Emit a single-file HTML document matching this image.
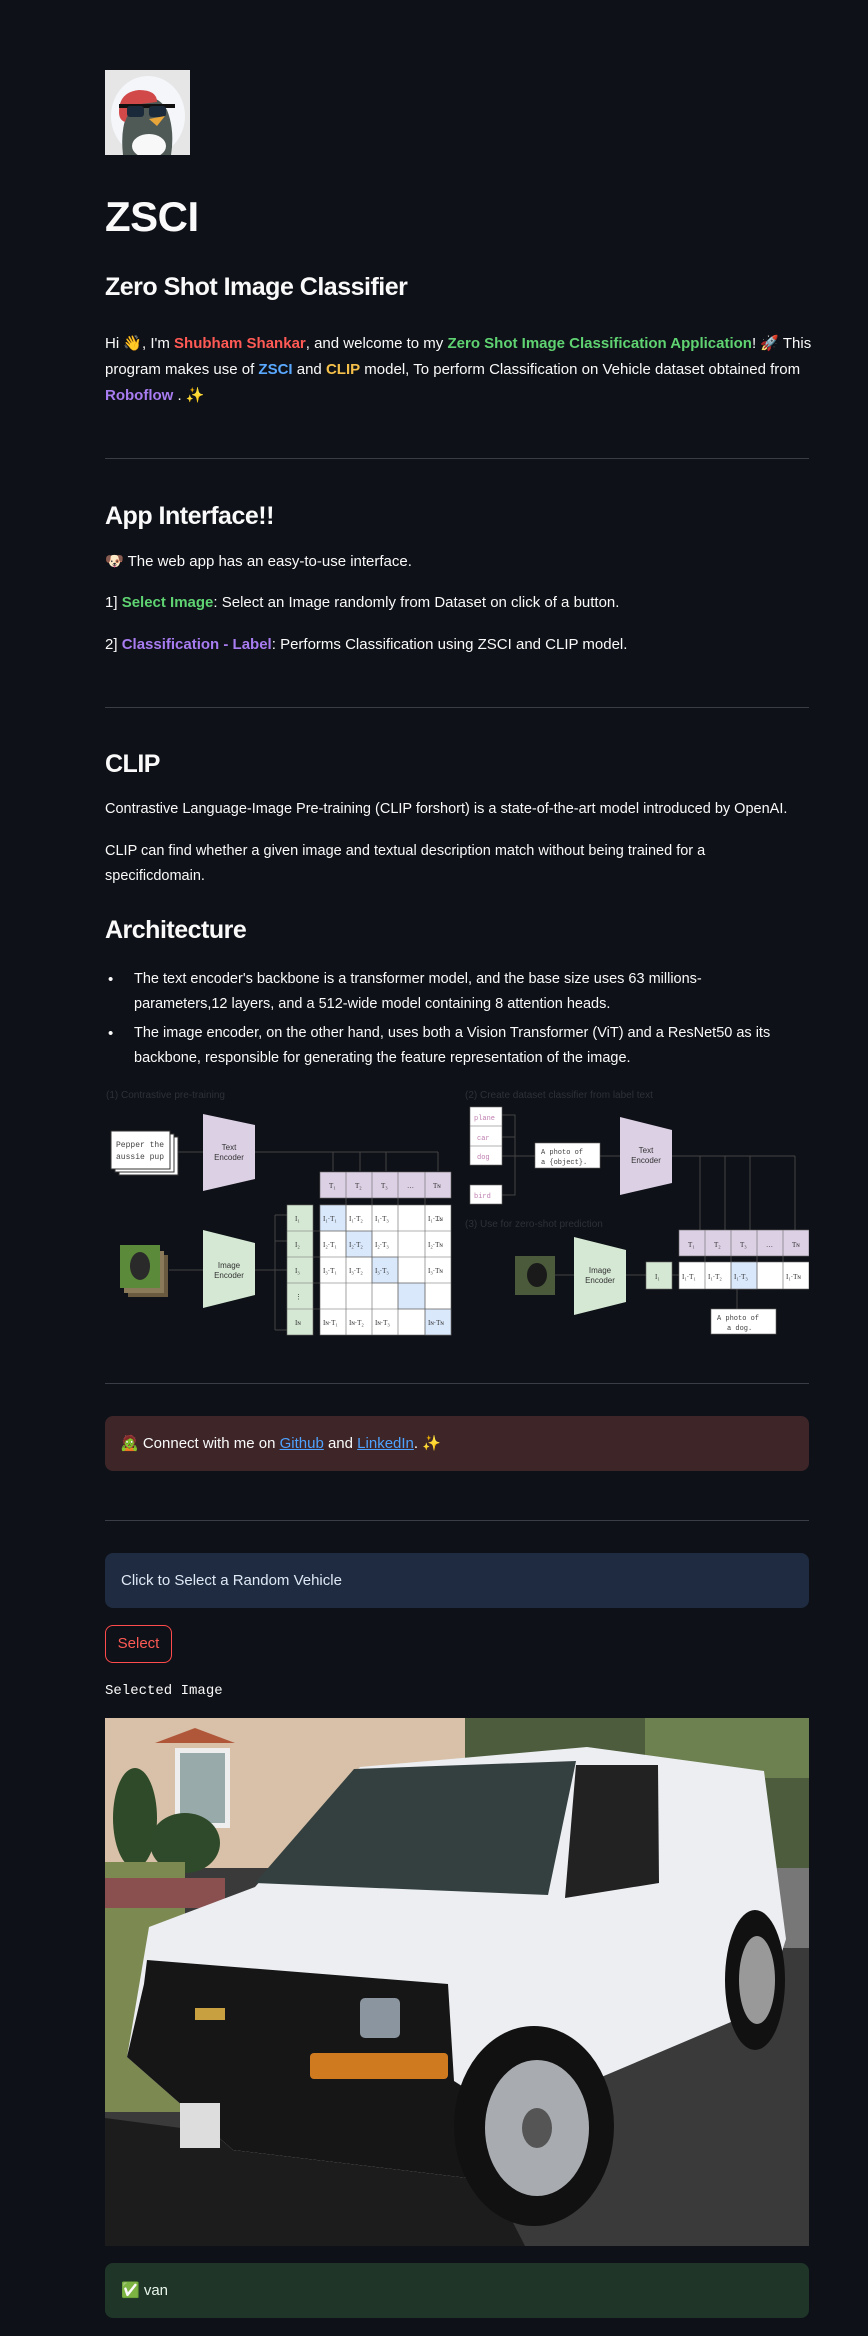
<!DOCTYPE html>
<html><head><meta charset="utf-8"><style>
*{margin:0;padding:0;box-sizing:border-box}
body{width:868px;height:2336px;background:#0e1117;color:#fafafa;font-family:"Liberation Sans",sans-serif;position:relative;overflow:hidden}
.a{position:absolute;white-space:nowrap}
.p{font-size:15px;line-height:26px;left:105px}
.h{font-weight:bold;left:105px;letter-spacing:-0.5px}
.hr{position:absolute;left:105px;width:704px;height:1px;background:#3a3d45}
.r{color:#ff5a55;font-weight:bold}.g{color:#5fd372;font-weight:bold}.b{color:#5aa9ff;font-weight:bold}.o{color:#f5c04a;font-weight:bold}.v{color:#a77cf0;font-weight:bold}
.box{position:absolute;left:105px;width:704px;border-radius:8px}
a{color:#4fa3ff;text-decoration:underline}
</style></head><body>

<svg class="a" style="left:105px;top:70px" width="85" height="85" viewBox="0 0 85 85">
<rect width="85" height="85" fill="#e6e6e6"/>
<ellipse cx="43" cy="46" rx="37" ry="40" fill="#f4f6fa"/>
<path d="M18 85 Q14 50 30 32 Q50 20 62 40 Q70 60 66 85Z" fill="#4f5a56"/>
<ellipse cx="44" cy="76" rx="17" ry="12" fill="#f8f8f8"/>
<path d="M14 42 Q14 22 34 20 Q52 20 52 32 L36 34 Q24 38 20 52 Q14 50 14 42Z" fill="#d2494a"/>
<rect x="14" y="34" width="56" height="4" fill="#111"/>
<rect x="22" y="36" width="17" height="11" rx="3" fill="#1b2a3a"/>
<rect x="44" y="36" width="17" height="11" rx="3" fill="#1b2a3a"/>
<path d="M44 49 L60 46 L52 56 Z" fill="#e8a53a"/>
</svg>

<div class="a h" style="top:192px;font-size:42px;line-height:50px">ZSCI</div>
<div class="a h" style="top:272px;font-size:25px;line-height:30px">Zero Shot Image Classifier</div>
<div class="a p" style="top:331px">Hi 👋, I'm <span class="r">Shubham Shankar</span>, and welcome to my <span class="g">Zero Shot Image Classification Application</span>! 🚀 This<br>program makes use of <span class="b">ZSCI</span> and <span class="o">CLIP</span> model, To perform Classification on Vehicle dataset obtained from<br><span class="v">Roboflow</span> . ✨</div>

<div class="hr" style="top:458px"></div>
<div class="a h" style="top:501px;font-size:25px;line-height:30px">App Interface!!</div>
<div class="a p" style="top:550px;line-height:24px">🐶 The web app has an easy-to-use interface.</div>
<div class="a p" style="top:591px;line-height:24px">1] <span class="g">Select Image</span>: Select an Image randomly from Dataset on click of a button.</div>
<div class="a p" style="top:633px;line-height:24px">2] <span class="v">Classification - Label</span>: Performs Classification using ZSCI and CLIP model.</div>

<div class="hr" style="top:707px"></div>
<div class="a h" style="top:749px;font-size:25px;line-height:30px">CLIP</div>
<div class="a p" style="top:797px;line-height:25px;font-size:14.5px">Contrastive Language-Image Pre-training (CLIP forshort) is a state-of-the-art model introduced by OpenAI.</div>
<div class="a p" style="top:839px;line-height:25px;font-size:14.5px">CLIP can find whether a given image and textual description match without being trained for a<br>specificdomain.</div>
<div class="a h" style="top:915px;font-size:25px;line-height:30px">Architecture</div>
<div class="a p" style="top:967px;left:108px;line-height:25px">•</div>
<div class="a p" style="top:967px;left:134px;line-height:25px;font-size:14.5px">The text encoder's backbone is a transformer model, and the base size uses 63 millions-<br>parameters,12 layers, and a 512-wide model containing 8 attention heads.</div>
<div class="a p" style="top:1021px;left:108px;line-height:25px">•</div>
<div class="a p" style="top:1021px;left:134px;line-height:25px;font-size:14.5px">The image encoder, on the other hand, uses both a Vision Transformer (ViT) and a ResNet50 as its<br>backbone, responsible for generating the feature representation of the image.</div>

<svg class="a" style="left:105px;top:1085px" width="704" height="260" viewBox="0 0 704 260" font-family="Liberation Sans" font-size="8">
<g fill="#2e3138" font-size="10"><text x="1" y="13">(1) Contrastive pre-training</text><text x="360" y="13">(2) Create dataset classifier from label text</text><text x="360" y="142">(3) Use for zero-shot prediction</text></g>
<g stroke="#444" fill="none" stroke-width="1">
<path d="M73 67H98M150 67H333M228 67V86M255 67V86M281 67V86M333 67V86"/>
<path d="M64 185H98M150 185H170M170 130V245M170 130H182M170 156H182M170 185H182M170 245H182"/>
<path d="M397 30H410V110H397M397 52H410M397 71H410M410 71H430M495 71H515M567 71H690M595 71V145M620 71V145M645 71V145M690 71V145"/>
<path d="M450 190H469M521 190H541M567 190H574M632 204V224"/>
</g>
<rect x="14" y="52" width="59" height="38" fill="#fff" stroke="#333"/>
<rect x="10" y="49" width="59" height="38" fill="#fff" stroke="#333"/>
<rect x="6" y="46" width="59" height="38" fill="#fff" stroke="#333"/>
<text x="11" y="62" font-family="Liberation Mono" fill="#444">Pepper the</text><text x="11" y="74" font-family="Liberation Mono" fill="#444">aussie pup</text>
<polygon points="98,29 150,40 150,94 98,106" fill="#dcd0e4"/>
<text x="124" y="65" text-anchor="middle" fill="#333">Text</text><text x="124" y="75" text-anchor="middle" fill="#333">Encoder</text>
<polygon points="98,145 150,158 150,210 98,223" fill="#d5e8d4"/>
<text x="124" y="183" text-anchor="middle" fill="#333">Image</text><text x="124" y="193" text-anchor="middle" fill="#333">Encoder</text>
<rect x="23" y="170" width="40" height="42" fill="#6a5a40"/><rect x="19" y="166" width="40" height="42" fill="#8a7a5a"/>
<rect x="15" y="160" width="40" height="43" fill="#5a8a3a"/><ellipse cx="35" cy="181" rx="10" ry="14" fill="#2a2a2a"/>
<g stroke="#666" stroke-width="0.6">
<rect x="215" y="87" width="131" height="26" fill="#dcd0e4"/>
<rect x="182" y="120" width="26" height="130" fill="#d5e8d4"/>
<rect x="215" y="120" width="131" height="130" fill="#fff"/>
<rect x="215" y="120" width="26" height="26" fill="#dae8fc"/><rect x="241" y="146" width="26" height="26" fill="#dae8fc"/><rect x="267" y="172" width="26" height="26" fill="#dae8fc"/><rect x="293" y="198" width="27" height="26" fill="#dae8fc"/><rect x="320" y="224" width="26" height="26" fill="#dae8fc"/>
<path d="M241 87V250M267 87V250M293 87V250M320 87V250M182 146H346M182 172H346M182 198H346M182 224H346" fill="none"/>
<rect x="365" y="22" width="32" height="58" fill="#fff"/><path d="M365 41H397M365 61H397"/>
<rect x="365" y="100" width="32" height="19" fill="#fff"/>
<rect x="430" y="58" width="65" height="25" fill="#fff"/>
<rect x="574" y="145" width="130" height="26" fill="#dcd0e4"/>
<rect x="541" y="177" width="26" height="27" fill="#d5e8d4"/>
<rect x="574" y="177" width="130" height="27" fill="#fff"/><rect x="626" y="177" width="26" height="27" fill="#dae8fc"/>
<path d="M600 145V204M626 145V204M652 145V204M678 145V204" fill="none"/>
<rect x="606" y="224" width="65" height="25" fill="#fff"/>
</g>
<g fill="#333" font-size="7" font-family="Liberation Serif">
<text x="224" y="103">T₁</text><text x="250" y="103">T₂</text><text x="276" y="103">T₃</text><text x="302" y="103">…</text><text x="328" y="103">Tɴ</text>
<text x="190" y="136">I₁</text><text x="190" y="162">I₂</text><text x="190" y="188">I₃</text><text x="190" y="214">⋮</text><text x="190" y="240">Iɴ</text>
<text x="218" y="136">I₁·T₁</text><text x="244" y="136">I₁·T₂</text><text x="270" y="136">I₁·T₃</text><text x="330" y="136">…</text><text x="323" y="136">I₁·Tɴ</text>
<text x="218" y="162">I₂·T₁</text><text x="244" y="162">I₂·T₂</text><text x="270" y="162">I₂·T₃</text><text x="323" y="162">I₂·Tɴ</text>
<text x="218" y="188">I₃·T₁</text><text x="244" y="188">I₃·T₂</text><text x="270" y="188">I₃·T₃</text><text x="323" y="188">I₃·Tɴ</text>
<text x="218" y="240">Iɴ·T₁</text><text x="244" y="240">Iɴ·T₂</text><text x="270" y="240">Iɴ·T₃</text><text x="323" y="240">Iɴ·Tɴ</text>
<text x="583" y="162">T₁</text><text x="609" y="162">T₂</text><text x="635" y="162">T₃</text><text x="661" y="162">…</text><text x="687" y="162">Tɴ</text>
<text x="550" y="194">I₁</text><text x="577" y="194">I₁·T₁</text><text x="603" y="194">I₁·T₂</text><text x="629" y="194">I₁·T₃</text><text x="681" y="194">I₁·Tɴ</text>
</g>
<g font-family="Liberation Mono" font-size="7" fill="#c080b0"><text x="369" y="35">plane</text><text x="372" y="55">car</text><text x="372" y="74">dog</text><text x="369" y="113">bird</text></g>
<g font-family="Liberation Mono" font-size="7" fill="#444"><text x="436" y="69">A photo of</text><text x="436" y="79">a {object}.</text><text x="612" y="235">A photo of</text><text x="622" y="245">a dog.</text></g>
<polygon points="515,32 567,45 567,98 515,110" fill="#dcd0e4"/>
<text x="541" y="68" text-anchor="middle" fill="#333">Text</text><text x="541" y="78" text-anchor="middle" fill="#333">Encoder</text>
<polygon points="469,152 521,165 521,217 469,230" fill="#d5e8d4"/>
<text x="495" y="188" text-anchor="middle" fill="#333">Image</text><text x="495" y="198" text-anchor="middle" fill="#333">Encoder</text>
<rect x="410" y="171" width="40" height="39" fill="#4a5a3a"/><ellipse cx="432" cy="190" rx="10" ry="12" fill="#1a1a1a"/>
</svg>

<div class="hr" style="top:1383px"></div>
<div class="box" style="top:1416px;height:55px;background:#3d2528"></div>
<div class="a p" style="top:1431px;left:120px;line-height:26px">🧟 Connect with me on <a>Github</a> and <a>LinkedIn</a>. ✨</div>
<div class="hr" style="top:1520px"></div>
<div class="box" style="top:1553px;height:55px;background:#1e2b40"></div>
<div class="a p" style="top:1568px;left:121px;line-height:26px;color:#dfe8f5">Click to Select a Random Vehicle</div>
<div class="a" style="left:105px;top:1625px;width:67px;height:38px;border:1px solid #ff4b4b;border-radius:8px;color:#ff5a55;font-size:15px;line-height:36px;text-align:center">Select</div>
<div class="a" style="left:105px;top:1682px;font-family:'Liberation Mono',monospace;font-size:14px;line-height:18px">Selected Image</div>

<svg class="a" style="left:105px;top:1718px" width="704" height="528" viewBox="0 0 704 528">
<rect width="704" height="528" fill="#3a3a3a"/>
<rect width="380" height="150" fill="#d8c1a8"/>
<rect x="360" width="344" height="160" fill="#4c5c3c"/>
<rect x="540" y="0" width="164" height="60" fill="#6d8050"/>
<rect x="70" y="30" width="55" height="80" fill="#eee"/><rect x="75" y="35" width="45" height="70" fill="#9aa"/>
<path d="M50 25 L90 10 L130 25Z" fill="#b0573a"/>
<ellipse cx="30" cy="100" rx="22" ry="50" fill="#2e4a28"/><ellipse cx="80" cy="125" rx="35" ry="30" fill="#2f4a2a"/>
<rect x="0" y="144" width="80" height="250" fill="#7c8a52"/>
<rect x="0" y="160" width="120" height="30" fill="#8a5050"/>
<rect x="620" y="150" width="84" height="80" fill="#777"/>
<polygon points="0,400 380,450 420,528 0,528" fill="#1c1c1c"/>
<polygon points="255,49 482,29 659,53 681,221 659,290 487,363 388,388 371,461 128,432 22,339 44,209 150,169" fill="#eceef2"/>
<polygon points="249,51 471,43 443,177 150,165" fill="#34403f"/>
<polygon points="471,47 553,47 554,165 460,180" fill="#222"/>
<polygon points="42,242 343,266 349,363 388,388 371,461 128,432 22,339 39,266" fill="#161616"/>
<rect x="205" y="335" width="138" height="26" rx="4" fill="#d07a20"/>
<rect x="255" y="280" width="40" height="40" rx="5" fill="#8b95a0"/>
<rect x="90" y="290" width="30" height="12" fill="#c9a040"/>
<rect x="75" y="385" width="40" height="45" fill="#ddd"/>
<ellipse cx="429" cy="408" rx="80" ry="100" fill="#111"/>
<ellipse cx="432" cy="410" rx="52" ry="68" fill="#a8acb0"/>
<ellipse cx="432" cy="410" rx="15" ry="20" fill="#555"/>
<ellipse cx="650" cy="262" rx="30" ry="70" fill="#111"/>
<ellipse cx="652" cy="262" rx="18" ry="44" fill="#999"/>
</svg>

<div class="box" style="top:2263px;height:55px;background:#1f3528"></div>
<div class="a p" style="top:2278px;left:121px;line-height:26px;color:#e8f5ea">✅ van</div>
</body></html>
